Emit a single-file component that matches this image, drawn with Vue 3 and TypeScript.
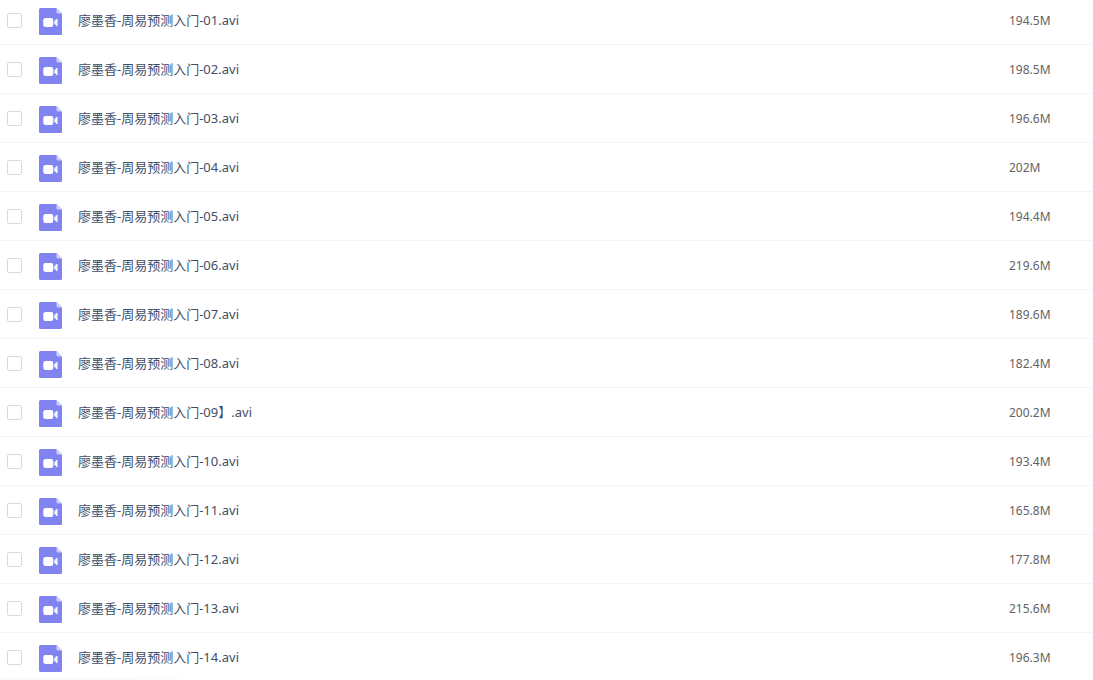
<script setup lang="ts">
interface FileEntry {
  id: string
  name: string
  size: string
}

const sizes: string[] = [
  '194.5M', '198.5M', '196.6M', '202M', '194.4M', '219.6M', '189.6M',
  '182.4M', '200.2M', '193.4M', '165.8M', '177.8M', '215.6M', '196.3M',
]

const files: FileEntry[] = sizes.map((size, index) => {
  const number = String(index + 1).padStart(2, '0')
  const suffix = number === '09' ? '】' : ''
  return { id: `file-${number}`, name: `廖墨香-周易预测入门-${number}${suffix}.avi`, size }
})
</script>

<template>
  <main class="viewport">
    <table class="files">
      <tbody>
        <tr v-for="file in files" :key="file.id">
          <td class="pick"><input :id="file.id" type="checkbox" class="box" /></td>
          <td class="kind">
            <svg class="icon" width="23" height="27" viewBox="0 0 23 27" aria-hidden="true">
              <path d="M1.5 0H17.5L23 5.5V25.5Q23 27 21.5 27H1.5Q0 27 0 25.5V1.5Q0 0 1.5 0Z" fill="#8183f1" />
              <path d="M17.5 0L23 5.5H19Q17.5 5.5 17.5 4Z" fill="#cfd0fc" />
              <rect x="4.3" y="10" width="10" height="9" rx="2.2" fill="#fff" />
              <path d="M15.2 13.6L17.3 11.2Q18.6 10.2 18.6 11.6V17.4Q18.6 18.8 17.3 17.8L15.2 15.4Z" fill="#fff" fill-opacity="0.9" />
            </svg>
          </td>
          <td class="name"><label :for="file.id">{{ file.name }}</label></td>
          <td class="size">{{ file.size }}</td>
        </tr>
      </tbody>
    </table>
    <div class="edge"></div>
  </main>
</template>

<style scoped>
.viewport {
  position: relative;
  height: 100vh;
  overflow: hidden;
  background: #fff;
  font-family: "Noto Sans", "Noto Sans CJK SC", sans-serif;
}

.files {
  width: 100%;
  margin-top: -4px;
  table-layout: fixed;
  border-collapse: separate;
  border-spacing: 0;
}

td {
  box-sizing: border-box;
  height: 49px;
  padding: 0;
  border-bottom: 1px solid #f1f4fa;
  vertical-align: middle;
  line-height: 20px;
}

.pick {
  width: 39px;
  padding-left: 7px;
}

.box {
  display: block;
  box-sizing: border-box;
  width: 15px;
  height: 15px;
  margin: 0;
  appearance: none;
  border: 1px solid #d5dae5;
  border-radius: 2px;
  background: #fff;
}

.box:checked {
  border-color: #8183f1;
  background: #8183f1;
}

.kind {
  width: 39px;
  padding-top: 2px;
}

.icon {
  display: block;
}

.name {
  color: #424e67;
  font-size: 13px;
  white-space: nowrap;
}

.size {
  width: 84px;
  padding-top: 2px;
  color: #636363;
  font-size: 12px;
}

.edge {
  position: absolute;
  bottom: 0;
  left: 0;
  width: 200px;
  height: 3px;
  background: linear-gradient(to right, #fafafa 70%, #fff);
}
</style>
